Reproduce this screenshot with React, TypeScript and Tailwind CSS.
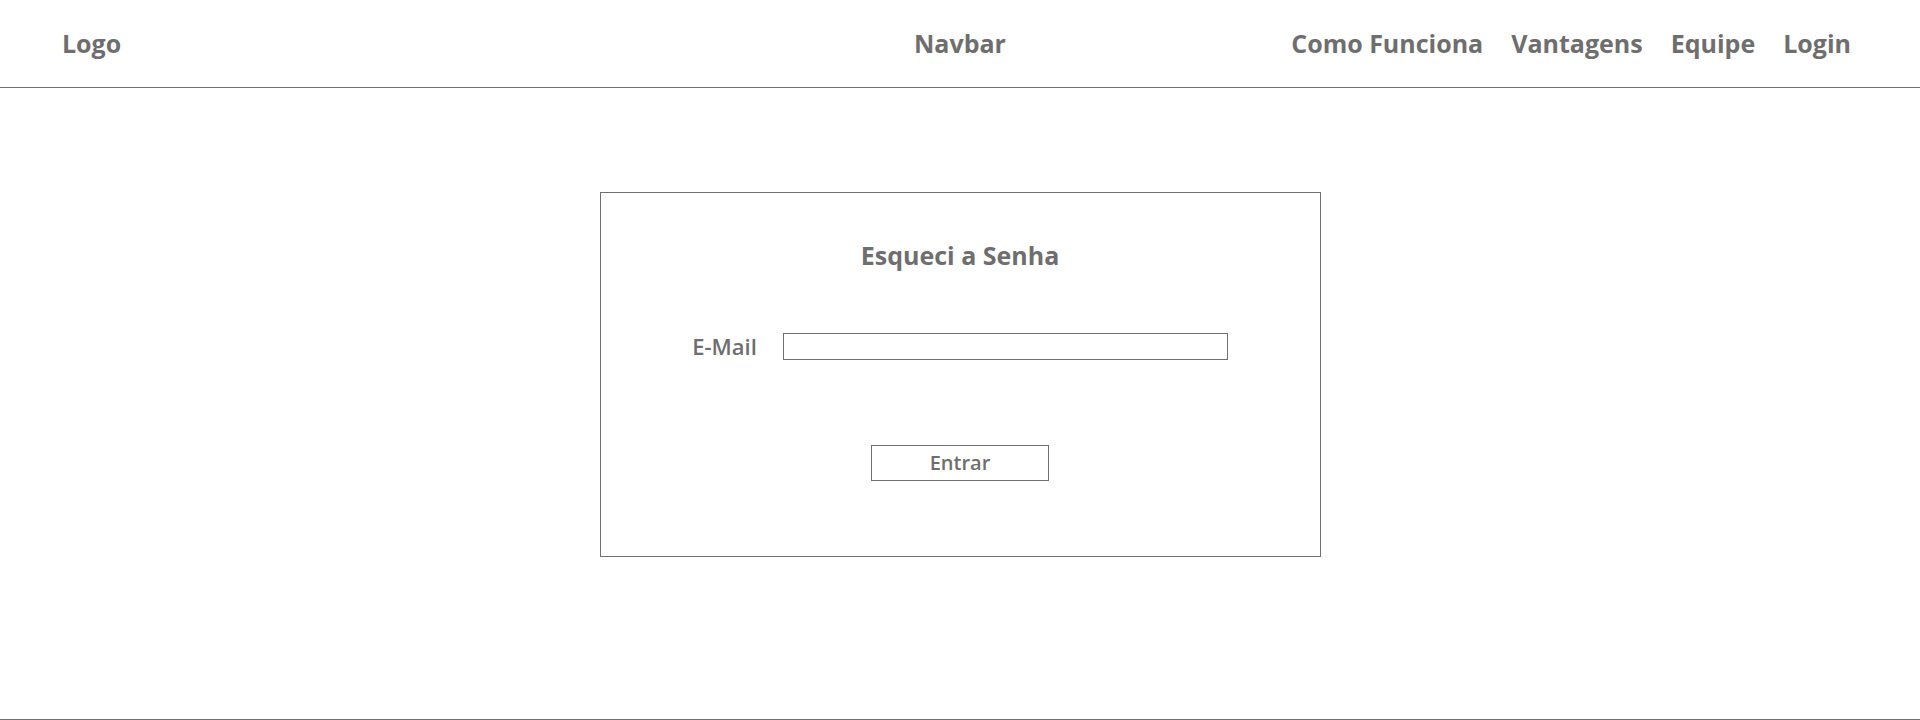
import React from "react";

export default function App() {
  const open = { fontFamily: "'Open Sans', 'Noto Sans', sans-serif" };
  return (
    <div className="flex h-[720px] w-full flex-col bg-white text-[#6e6e6e]" style={open}>
      <header className="grid h-[88px] shrink-0 grid-cols-[1fr_auto_1fr] items-center border-b border-[#707070] px-[62px]">
        <div className="whitespace-nowrap text-[25px] font-bold">Logo</div>
        <div className="whitespace-nowrap text-[25px] font-bold">Navbar</div>
        <nav className="flex justify-end gap-[28px] whitespace-nowrap pr-[7px] text-[25px] font-bold">
          <span>Como Funciona</span>
          <span>Vantagens</span>
          <span>Equipe</span>
          <span>Login</span>
        </nav>
      </header>
      <main className="flex flex-1 justify-center pt-[104px]">
        <div className="flex h-[365px] w-[721px] flex-col items-center border border-[#707070]">
          <h1 className="mt-[47px] text-[25px] font-bold leading-[30px]">Esqueci a Senha</h1>
          <div className="mt-[60px] flex h-[33px] items-center gap-[26px]">
            <label className="text-[22px] font-semibold leading-[33px]">E-Mail</label>
            <div className="h-[27px] w-[445px] border border-[#707070]" />
          </div>
          <button className="mt-[82px] flex h-[36px] w-[178px] items-center justify-center border border-[#707070] text-[20px] font-semibold">
            Entrar
          </button>
        </div>
      </main>
      <footer className="h-[1px] shrink-0 border-t border-[#707070]" />
    </div>
  );
}
